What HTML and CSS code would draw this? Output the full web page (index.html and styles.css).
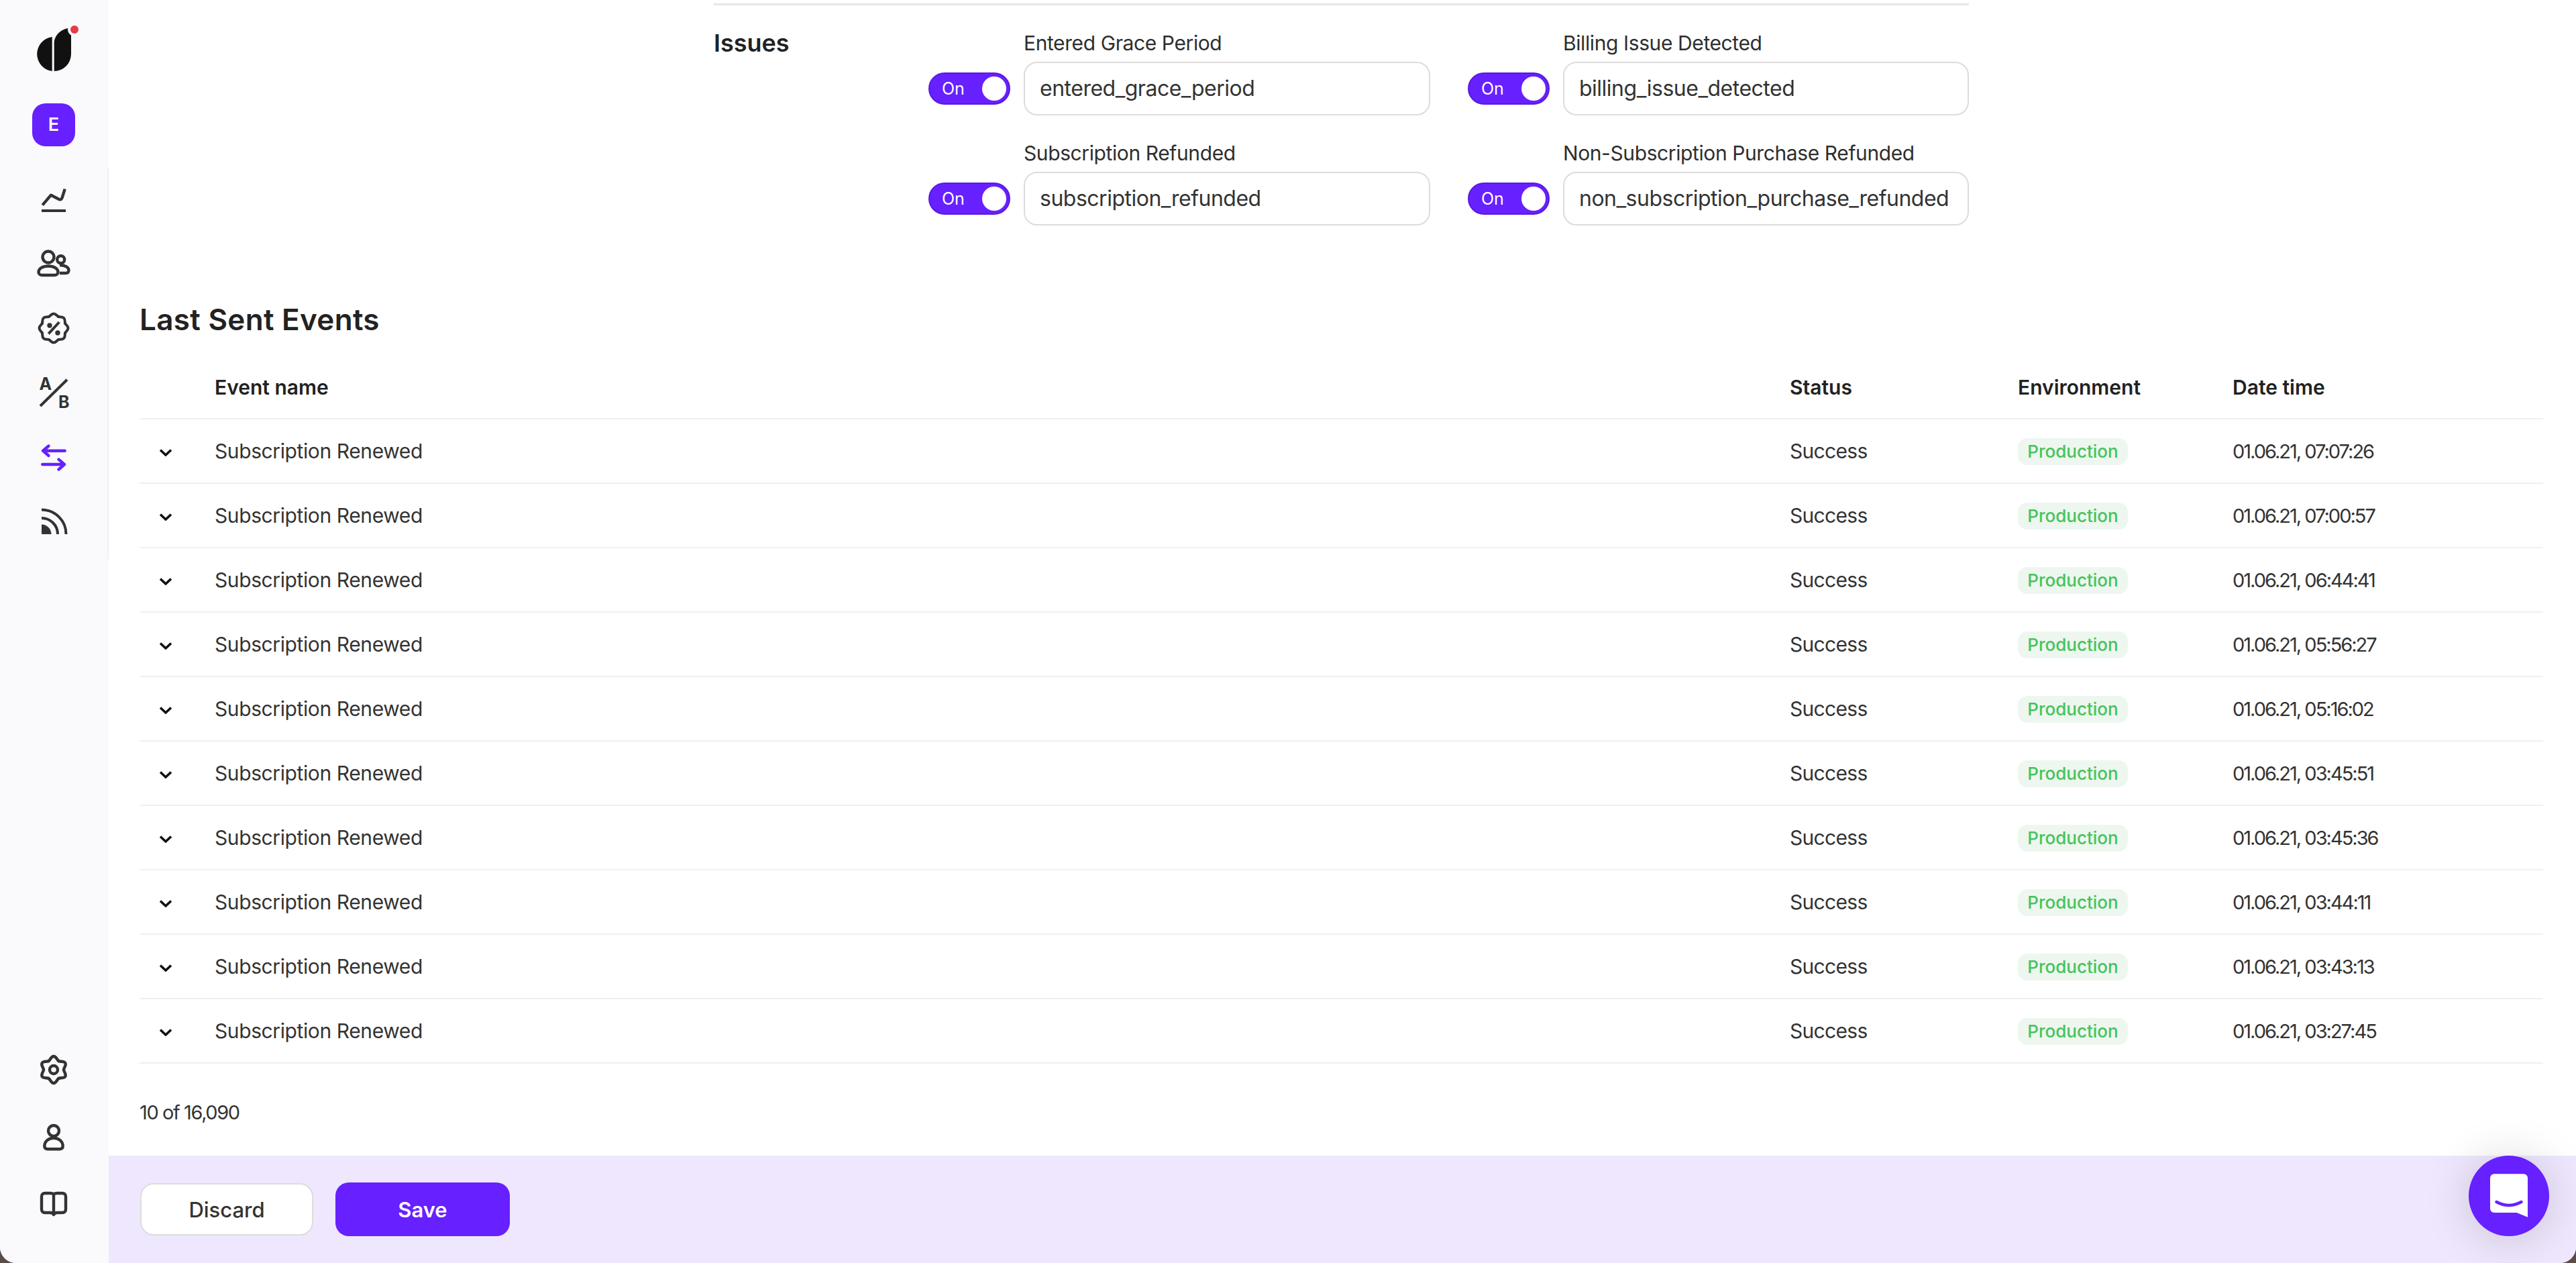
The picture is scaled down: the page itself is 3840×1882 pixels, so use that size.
FILE: index.html
```html
<!DOCTYPE html>
<html lang="en">
<head>
<meta charset="utf-8">
<title>Last Sent Events</title>
<link rel="stylesheet" href="styles.css">
</head>
<body>
<svg class="defs" width="0" height="0" aria-hidden="true">
  <defs>
    <path id="gear-lobe" class="lobe" d="M-7.5-13C-4.9-14.5-4-20 0-20C4-20 4.9-14.5 7.5-13"/>
    <path id="badge-lobe" class="lobe" d="M-7.1-17.1C-5.2-17.9-3.5-21.5 0-21.5C3.5-21.5 5.2-17.9 7.1-17.1"/>
    <path id="chev" d="M1 1.5L9 9L17 1.5"/>
  </defs>
</svg>
<div class="app">
  <aside class="sidebar">
    <div class="brand">
      <svg class="logo" width="80" height="80" viewBox="40 34 80 80">
        <path class="ink" d="M78.7 55A25.7 25.7 0 0 0 78.7 106Z"/>
        <path class="ink" d="M81.7 106V65C81.7 53 91 44 103 42L107 47V80.5A25.5 25.5 0 0 1 81.7 106Z"/>
        <circle class="halo" cx="112" cy="44" r="10"/>
        <circle class="dot" cx="112" cy="44" r="6"/>
      </svg>
    </div>
    <div class="workspace">E</div>
    <nav class="nav">
      <a class="nav-item"><svg class="ico" viewBox="0 0 64 64"><path d="M15.3 40.7L28 25.7L40 32C42.5 33 43.5 32 44.5 30L48.7 16.7"/><rect class="fill" x="14" y="47" width="36" height="4"/></svg></a>
      <a class="nav-item"><svg class="ico" viewBox="0 0 64 64"><circle cx="24" cy="22" r="8.5"/><path d="M15 49H33C36.5 49 38.5 47 38.5 44.5C38.5 39 32 35.5 24 35.5C16 35.5 9.5 39 9.5 44.5C9.5 47 11.5 49 15 49Z"/><circle cx="42.7" cy="25.7" r="5.5"/><path d="M41 34C48.5 34 54.5 37 54.5 41.5C54.5 44.5 52.5 46 49.5 46H41"/></svg></a>
      <a class="nav-item"><svg class="ico thin" viewBox="0 0 64 64"><g transform="translate(32 32)"><use href="#badge-lobe"/><use href="#badge-lobe" transform="rotate(45)"/><use href="#badge-lobe" transform="rotate(90)"/><use href="#badge-lobe" transform="rotate(135)"/><use href="#badge-lobe" transform="rotate(180)"/><use href="#badge-lobe" transform="rotate(225)"/><use href="#badge-lobe" transform="rotate(270)"/><use href="#badge-lobe" transform="rotate(315)"/></g><path d="M24.3 40.3L40.3 23"/><circle class="fill" cx="26" cy="28" r="3.7"/><circle class="fill" cx="38" cy="39" r="3.7"/></svg></a>
      <a class="nav-item"><svg class="ico thin" viewBox="0 0 64 64"><text class="ab" x="10.5" y="28">A</text><text class="ab" x="39" y="55">B</text><path d="M12 52L52 12.7"/></svg></a>
      <a class="nav-item"><svg class="ico accent" viewBox="0 0 64 64"><path d="M48.7 22.7H16M24.5 15.5L16 22.7L24.5 30"/><path d="M15.3 43H48M39.5 35.7L48 43L39.5 50.5"/></svg></a>
      <a class="nav-item"><svg class="ico thin" viewBox="0 0 64 64"><path class="fill" d="M14 36.5A14.5 14.5 0 0 1 28.5 51H14Z"/><path d="M14 27A24 24 0 0 1 38 51"/><path d="M14 14.5A36.5 36.5 0 0 1 50.5 51"/></svg></a>
    </nav>
    <div class="nav-bottom">
      <a class="nav-item tall"><svg class="ico" viewBox="0 0 64 64"><g transform="translate(32 32)"><use href="#gear-lobe"/><use href="#gear-lobe" transform="rotate(60)"/><use href="#gear-lobe" transform="rotate(120)"/><use href="#gear-lobe" transform="rotate(180)"/><use href="#gear-lobe" transform="rotate(240)"/><use href="#gear-lobe" transform="rotate(300)"/></g><circle cx="32" cy="32" r="6"/></svg></a>
      <a class="nav-item tall"><svg class="ico" viewBox="0 0 64 64"><circle cx="32" cy="23" r="8"/><path d="M23 50.3H41C44 50.3 45.7 48.5 45.7 46C45.7 39 39.5 33.7 32 33.7C24.5 33.7 18.3 39 18.3 46C18.3 48.5 20 50.3 23 50.3Z"/></svg></a>
      <a class="nav-item tall"><svg class="ico" viewBox="0 0 64 64"><path d="M32 18C31 16.5 29 16 27 16H19C16 16 14 18 14 21V40C14 43 16 45 19 45H27C29 45 31 46 32 48C33 46 35 45 37 45H45C48 45 50 43 50 40V21C50 18 48 16 45 16H37C35 16 33 16.5 32 18V48"/></svg></a>
    </div>
  </aside>

  <main class="main">
    <div class="content">
      <section class="issues">
        <h2 class="issues-title">Issues</h2>
        <div class="field">
          <div class="field-label">Entered Grace Period</div>
          <div class="toggle"><span class="toggle-text">On</span><span class="knob"></span></div>
          <div class="input">entered_grace_period</div>
        </div>
        <div class="field">
          <div class="field-label">Billing Issue Detected</div>
          <div class="toggle"><span class="toggle-text">On</span><span class="knob"></span></div>
          <div class="input">billing_issue_detected</div>
        </div>
        <div class="field">
          <div class="field-label">Subscription Refunded</div>
          <div class="toggle"><span class="toggle-text">On</span><span class="knob"></span></div>
          <div class="input">subscription_refunded</div>
        </div>
        <div class="field">
          <div class="field-label">Non-Subscription Purchase Refunded</div>
          <div class="toggle"><span class="toggle-text">On</span><span class="knob"></span></div>
          <div class="input">non_subscription_purchase_refunded</div>
        </div>
      </section>

      <section class="events">
        <h1 class="events-title">Last Sent Events</h1>
        <div class="table">
          <div class="row head"><span></span><span>Event name</span><span>Status</span><span>Environment</span><span>Date time</span></div>
          <div class="row"><svg class="chev" viewBox="0 0 18 11"><use href="#chev"/></svg><span class="name">Subscription Renewed</span><span class="status">Success</span><span><em class="badge">Production</em></span><span class="date">01.06.21, 07:07:26</span></div>
          <div class="row"><svg class="chev" viewBox="0 0 18 11"><use href="#chev"/></svg><span class="name">Subscription Renewed</span><span class="status">Success</span><span><em class="badge">Production</em></span><span class="date">01.06.21, 07:00:57</span></div>
          <div class="row"><svg class="chev" viewBox="0 0 18 11"><use href="#chev"/></svg><span class="name">Subscription Renewed</span><span class="status">Success</span><span><em class="badge">Production</em></span><span class="date">01.06.21, 06:44:41</span></div>
          <div class="row"><svg class="chev" viewBox="0 0 18 11"><use href="#chev"/></svg><span class="name">Subscription Renewed</span><span class="status">Success</span><span><em class="badge">Production</em></span><span class="date">01.06.21, 05:56:27</span></div>
          <div class="row"><svg class="chev" viewBox="0 0 18 11"><use href="#chev"/></svg><span class="name">Subscription Renewed</span><span class="status">Success</span><span><em class="badge">Production</em></span><span class="date">01.06.21, 05:16:02</span></div>
          <div class="row"><svg class="chev" viewBox="0 0 18 11"><use href="#chev"/></svg><span class="name">Subscription Renewed</span><span class="status">Success</span><span><em class="badge">Production</em></span><span class="date">01.06.21, 03:45:51</span></div>
          <div class="row"><svg class="chev" viewBox="0 0 18 11"><use href="#chev"/></svg><span class="name">Subscription Renewed</span><span class="status">Success</span><span><em class="badge">Production</em></span><span class="date">01.06.21, 03:45:36</span></div>
          <div class="row"><svg class="chev" viewBox="0 0 18 11"><use href="#chev"/></svg><span class="name">Subscription Renewed</span><span class="status">Success</span><span><em class="badge">Production</em></span><span class="date">01.06.21, 03:44:11</span></div>
          <div class="row"><svg class="chev" viewBox="0 0 18 11"><use href="#chev"/></svg><span class="name">Subscription Renewed</span><span class="status">Success</span><span><em class="badge">Production</em></span><span class="date">01.06.21, 03:43:13</span></div>
          <div class="row"><svg class="chev" viewBox="0 0 18 11"><use href="#chev"/></svg><span class="name">Subscription Renewed</span><span class="status">Success</span><span><em class="badge">Production</em></span><span class="date">01.06.21, 03:27:45</span></div>
        </div>
        <p class="count">10 of 16,090</p>
      </section>
    </div>
    <footer class="footer">
      <button class="btn btn-ghost">Discard</button>
      <button class="btn btn-primary">Save</button>
    </footer>
  </main>

  <div class="chat">
    <svg width="120" height="120" viewBox="0 0 120 120"><path class="chat-bubble" d="M38 27.3H82A6 6 0 0 1 88 33.3V91.7L71.7 85H38A6 6 0 0 1 32 79V33.3A6 6 0 0 1 38 27.3Z"/><path class="chat-smile" d="M41.5 69Q60 79 78.5 69"/></svg>
  </div>
</div>
</body>
</html>
```
FILE: styles.css
```css
* { box-sizing: border-box; }
html, body { margin: 0; padding: 0; }
body {
  background: #5a4c48;
  font-family: "Inter", "Open Sans", sans-serif;
  color: #333;
  width: 3840px;
  height: 1882px;
  overflow: hidden;
}
.defs { position: absolute; }
.app {
  position: relative;
  display: flex;
  width: 3840px;
  height: 1882px;
  background: #fff;
  border-radius: 0 0 24px 24px;
  overflow: hidden;
}

/* sidebar */
.sidebar {
  flex: 0 0 160px;
  display: flex;
  flex-direction: column;
  align-items: stretch;
  background: #fafafd;
}
.brand { height: 154px; padding: 34px 0 0 39px; }
.logo { display: block; }
.ink { fill: #111; }
.halo { fill: #fafafd; }
.dot { fill: #e63c46; }
.workspace {
  width: 64px;
  height: 64px;
  margin: 0 0 31px 48px;
  border-radius: 20px;
  background: #6720ff;
  color: #fff;
  font-size: 27px;
  font-weight: 600;
  line-height: 64px;
  text-align: center;
}
.nav {
  height: 584px;
  border-right: 2px solid #f0f0f4;
}
.nav-item {
  display: flex;
  align-items: center;
  justify-content: center;
  height: 96px;
  width: 160px;
}
.nav-item.tall { height: 100px; }
.nav-bottom { margin-top: auto; margin-bottom: 38px; }
.ico {
  width: 64px;
  height: 64px;
  fill: none;
  stroke: #333;
  stroke-width: 4.4;
  stroke-linejoin: round;
  stroke-linecap: butt;
}
.ico.thin { stroke-width: 4; }
.ico .fill { fill: #333; stroke: none; }
.ico.accent { stroke: #6720ff; stroke-width: 4.4; stroke-linecap: round; }
.lobe { stroke-linecap: round; }
.ab { fill: #333; stroke: none; font-size: 25px; font-weight: 700; font-family: "Inter", sans-serif; }

/* main */
.main {
  flex: 1;
  min-width: 0;
  display: flex;
  flex-direction: column;
}
.content { flex: 1; min-height: 0; }

.issues {
  display: grid;
  grid-template-columns: 320px 748px 747px;
  row-gap: 32px;
  width: 1871px;
  margin: 5px 0 0 902px;
  padding-top: 32px;
  border-top: 3px solid #e6e6e6;
}
.issues-title {
  grid-row: 1;
  grid-column: 1;
  margin: 0;
  font-size: 36px;
  line-height: 48px;
  font-weight: 600;
  color: #222;
}
.field {
  display: grid;
  grid-template-columns: 122px 606px;
  column-gap: 20px;
  row-gap: 4px;
  align-items: center;
}
.field:nth-of-type(1) { grid-column: 2; grid-row: 1; }
.field:nth-of-type(2) { grid-column: 3; grid-row: 1; margin-left: 56px; grid-template-columns: 122px 605px; width: 747px; }
.field:nth-of-type(3) { grid-column: 2; grid-row: 2; }
.field:nth-of-type(4) { grid-column: 3; grid-row: 2; margin-left: 56px; grid-template-columns: 122px 605px; width: 747px; }
.field-label {
  grid-column: 2;
  font-size: 30px;
  line-height: 48px;
  letter-spacing: -0.4px;
  color: #2e2e2e;
  white-space: nowrap;
}
.toggle {
  display: flex;
  align-items: center;
  justify-content: space-between;
  width: 122px;
  height: 48px;
  padding: 0 4px 0 18px;
  border: 2px solid #5a1ae0;
  border-radius: 24px;
  background: #6720ff;
}
.toggle-text { color: #fff; font-size: 25px; }
.knob { width: 36px; height: 36px; border-radius: 50%; background: #fff; }
.input {
  height: 80px;
  padding: 0 22px;
  border: 2px solid #dcdcdc;
  border-radius: 20px;
  background: #fff;
  font-size: 32px;
  line-height: 76px;
  letter-spacing: -0.5px;
  color: #333;
  white-space: nowrap;
}

/* events */
.events { padding: 0 49px 0 46px; }
.events-title {
  margin: 107px 0 22px;
  font-size: 44px;
  line-height: 66px;
  font-weight: 600;
  letter-spacing: 0.3px;
  color: #222;
}
.row {
  display: grid;
  grid-template-columns: 112px 2348px 340px 320px 1fr;
  align-items: center;
  height: 96px;
  border-bottom: 2px solid #f0f0f0;
  font-size: 30px;
  color: #333;
}
.row.head { font-weight: 600; color: #222; height: 94px; }
.name { letter-spacing: -0.4px; }
.status { letter-spacing: -0.7px; }
.date { font-size: 29px; letter-spacing: -2px; }
.chev {
  width: 18px;
  height: 11px;
  margin: 4px 0 0 30px;
  fill: none;
  stroke: #111;
  stroke-width: 3.6;
}
.badge {
  display: inline-block;
  width: 164px;
  height: 40px;
  margin-top: 2px;
  border-radius: 14px;
  background: #edf7ef;
  color: #46c35c;
  font-style: normal;
  font-size: 26px;
  font-weight: 500;
  line-height: 40px;
  text-align: center;
  vertical-align: middle;
}
.count {
  margin: 51px 0 0;
  font-size: 29px;
  line-height: 44px;
  letter-spacing: -1.4px;
  color: #333;
}

/* footer */
.footer {
  flex: 0 0 160px;
  display: flex;
  align-items: center;
  gap: 33px;
  padding-left: 47px;
  background: #efe7fd;
}
.btn {
  height: 80px;
  border-radius: 20px;
  font-family: inherit;
  font-size: 31px;
  font-weight: 500;
}
.btn-ghost {
  width: 258px;
  height: 78px;
  border: 2px solid #dcdcdc;
  background: #fff;
  color: #333;
}
.btn-primary {
  width: 260px;
  border: 0;
  background: #6720ff;
  color: #fff;
  font-weight: 600;
}
.chat {
  position: absolute;
  right: 40px;
  bottom: 40px;
  width: 120px;
  height: 120px;
  border-radius: 50%;
  background: #6720ff;
  box-shadow: 0 4px 70px rgba(0, 0, 0, .16);
}
.chat svg { display: block; }
.chat-bubble { fill: #fff; }
.chat-smile { fill: none; stroke: #6720ff; stroke-width: 4.5; stroke-linecap: round; }
```
